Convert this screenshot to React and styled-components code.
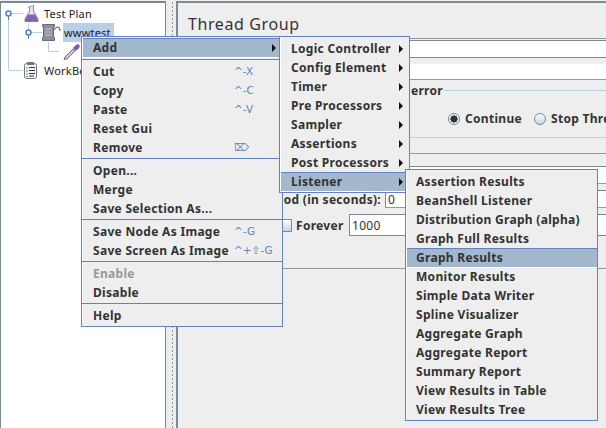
import React from "react";
import styled, { createGlobalStyle } from "styled-components";

const Global = createGlobalStyle`
  html, body {
    margin: 0;
    padding: 0;
    background: #eeeeee;
  }
  body {
    font-family: "Noto Sans", "DejaVu Sans", sans-serif;
    color: #333333;
  }
`;

const Frame = styled.div`
  position: relative;
  width: 606px;
  height: 428px;
  overflow: hidden;
  display: flex;
  background: #eeeeee;
  padding-top: 1px;
  box-sizing: border-box;
`;

/* left tree */
const TreePane = styled.div`
  width: 165px;
  flex: none;
  box-sizing: border-box;
  background: #fff;
  border-top: 2px solid #7a8a99;
  border-left: 1px solid #7a8a99;
  padding-top: 1px;
  font-size: 11px;
  letter-spacing: 0.2px;
`;

const Divider = styled.div`
  width: 11px;
  flex: none;
  box-sizing: border-box;
  border-left: 1px solid #7a8a99;
  margin-left: 0;
  background-image: radial-gradient(circle, #8a99a8 0.7px, transparent 0.8px);
  background-size: 3px 4px;
  background-position: 5px 0;
  background-repeat: repeat-y;
`;

const TreeRow = styled.div`
  display: flex;
  align-items: center;
  height: 19px;
  color: #222;
`;

const TreeLabel = styled.span`
  margin-left: ${(p) => p.$gap}px;
  padding: 0 3px 0 1px;
  height: 19px;
  line-height: 19px;
  background: ${(p) => (p.$selected ? "#b8cfe5" : "transparent")};
  white-space: nowrap;
`;

/* right panel */
const Panel = styled.div`
  flex: 1;
  min-width: 0;
  box-sizing: border-box;
  border-top: 2px solid #7a8a99;
  border-left: 2px solid #7a8a99;
  display: flex;
  flex-direction: column;
  font-size: 12px;
  font-weight: 700;
  letter-spacing: 0.3px;
`;

const Title = styled.div`
  height: 36px;
  line-height: 43px;
  flex: none;
  box-sizing: border-box;
  padding-left: 10px;
  font-size: 16px;
  font-weight: 400;
  letter-spacing: 0.6px;
  color: #333;
  border-bottom: 1px solid #999;
`;

const Rule = styled.div`
  flex: none;
  height: 1px;
  margin-top: ${(p) => p.$gap}px;
  background: ${(p) => p.$color};
`;

const TextField = styled.div`
  flex: none;
  box-sizing: border-box;
  height: ${(p) => p.$height}px;
  margin-top: ${(p) => p.$gap}px;
  margin-left: 110px;
  background: #fff;
  border-top: 1px solid ${(p) => p.$top || "#7a8a99"};
  border-bottom: 1px solid ${(p) => p.$bottom || "#7a8a99"};
`;

const Legend = styled.div`
  flex: none;
  height: 18px;
  margin-top: 1px;
  display: flex;
  align-items: center;
  white-space: nowrap;
`;

const LegendText = styled.div`
  width: 265px;
  flex: none;
  display: flex;
  justify-content: flex-end;
`;

const LegendLine = styled.div`
  flex: 1;
  height: 1px;
  margin-left: 1px;
  background: #b8cfe5;
`;

const RadioRow = styled.div`
  flex: none;
  height: 19px;
  margin-top: 10px;
  padding-left: 270px;
  display: flex;
  align-items: center;
  white-space: nowrap;
`;

const Radio = styled.span`
  width: 12px;
  height: 12px;
  flex: none;
  box-sizing: border-box;
  border-radius: 50%;
  border: 1px solid #7a8a99;
  background: ${(p) =>
    p.$checked
      ? "radial-gradient(circle, #333 3.4px, #eef2f7 3.8px)"
      : "linear-gradient(#fff, #c4d4e4)"};
  margin-right: 5px;
`;

const RadioLabel = styled.span`
  width: 69px;
  flex: none;
`;

const FormRow = styled.div`
  flex: none;
  height: ${(p) => p.$height}px;
  margin-top: ${(p) => p.$gap}px;
  display: flex;
  align-items: center;
  white-space: nowrap;
`;

const FormLabel = styled.div`
  width: ${(p) => p.$width}px;
  flex: none;
  display: flex;
  justify-content: flex-end;
  font-size: 12px;
`;

const Input = styled.div`
  flex: 1;
  align-self: stretch;
  box-sizing: border-box;
  margin-left: ${(p) => p.$gap}px;
  padding-left: 2px;
  background: #fff;
  border-top: 1px solid #7a8a99;
  border-left: 1px solid #7a8a99;
  border-bottom: 1px solid ${(p) => p.$bottom};
  font-weight: 400;
  font-size: 12px;
  display: flex;
  align-items: center;
`;

const Check = styled.span`
  width: 10px;
  height: 13px;
  flex: none;
  box-sizing: border-box;
  margin-left: 104px;
  border: 1px solid #7a8a99;
  border-left: none;
  background: linear-gradient(#fff, #c4d4e4);
`;

const CheckLabel = styled.span`
  width: 53px;
  flex: none;
  margin-left: 4px;
`;

/* popup menus, they lie over the rest */
const Menu = styled.div`
  position: absolute;
  left: ${(p) => p.$left}px;
  top: ${(p) => p.$top}px;
  width: ${(p) => p.$width}px;
  box-sizing: border-box;
  background: #eeeeee;
  border: 1px solid #6382bf;
  box-shadow: inset 1px 0 0 #fff;
  padding: ${(p) => p.$padTop}px 0 1px 1px;
  font-size: 12px;
  font-weight: 700;
  letter-spacing: 0.3px;
  color: #333;
  z-index: ${(p) => p.$layer};
`;

const Item = styled.div`
  position: relative;
  height: 19px;
  line-height: 19px;
  padding-left: ${(p) => p.$indent || 10}px;
  white-space: nowrap;
  display: flex;
  justify-content: space-between;
  color: ${(p) => (p.$disabled ? "#999999" : "#333333")};
  background: ${(p) => (p.$active ? "#a3b8cc" : "transparent")};
  box-shadow: ${(p) =>
    p.$active ? "inset 0 1px 0 #6382bf, 0 1px 0 #fff" : "none"};
`;

const Arrow = styled.span`
  align-self: center;
  width: 0;
  height: 0;
  margin-right: 6px;
  border-top: 4px solid transparent;
  border-bottom: 4px solid transparent;
  border-left: 4px solid #111;
`;

const Shortcut = styled.span`
  width: 48px;
  flex: none;
  font-family: "DejaVu Sans", sans-serif;
  font-size: 10.5px;
  font-weight: 400;
  letter-spacing: 0;
  color: #6382bf;
`;

const Separator = styled.div`
  height: ${(p) => (p.$first ? 5 : 4)}px;
  box-sizing: border-box;
  margin-left: -1px;
  padding-top: ${(p) => (p.$first ? 2 : 1)}px;

  &::before {
    content: "";
    display: block;
    height: 1px;
    background: #6382bf;
  }
`;

const FlaskIcon = () => (
  <svg width="17" height="19" viewBox="0 0 17 19">
    <path d="M5.5 2v5l-4.5 8v2.5h13V15L9.5 7V2" fill="#e4e2ee" stroke="#8a8a9a" />
    <path d="M4 10.5h7l3 5v2H1v-2z" fill="#8263b8" />
    <path d="M4 3.5l6-2.5" stroke="#a9a9b5" />
  </svg>
);

const SpoolIcon = () => (
  <svg width="20" height="19" viewBox="0 0 20 19">
    <path d="M.5 1.500h12v2h-1v11h1v3H.5v-3h1v-11h-1z" fill="#8c8c9c" stroke="#6a6a78" />
    <path d="M3 6h7M3 9h7M3 12h7" stroke="#c8c8d4" />
    <path d="M12 7c2-4 6-4 6 1" fill="none" stroke="#7a7a88" strokeWidth="1.3" />
  </svg>
);

const PipetteIcon = () => (
  <svg width="20" height="19" viewBox="0 0 20 19">
    <path d="M3 17l-1 1 1-3 8-8 2 2-8 8z" fill="#c9c2dd" stroke="#7a66a8" />
    <path d="M11 6l3-3 2-1 2 2-1 2-3 3z" fill="#7a55b5" />
  </svg>
);

const ClipboardIcon = () => (
  <svg width="16" height="19" viewBox="0 0 16 19">
    <rect x="1.5" y="2.5" width="12" height="15" rx="2" fill="#f4f4f4" stroke="#77708a" />
    <rect x="4" y="1" width="7" height="3" fill="#77708a" />
    <path d="M6 6.5h6M6 9.5h6M6 12.5h6M6 15h5" stroke="#333" />
    <path d="M3 7h2M3 10h2M3 13h2M3 15.5h2" stroke="#5aa05a" />
  </svg>
);

const Handle = ({ x, y }) => (
  <circle cx={x} cy={y} r="2.5" fill="#fff" stroke="#4d7fc4" strokeWidth="1.5" />
);

const line = "#b8cfe5";

// gutters draw in window x, hence the viewBox starting at 1 (pane border)
const RootGutter = () => (
  <svg width="23" height="19" viewBox="1 0 23 19">
    <path d="M8.500 9v10M12 9.500h11" stroke={line} fill="none" />
    <path d="M8.500 12v4" stroke="#4d7fc4" />
    <Handle x={8.5} y={9.5} />
  </svg>
);

const PlanGutter = () => (
  <svg width="41" height="19" viewBox="1 0 41 19">
    <path d="M8.500 0v19M28.500 0v6M31 9.500h11" stroke={line} fill="none" />
    <path d="M28.500 12v4" stroke="#4d7fc4" />
    <Handle x={28.5} y={9.5} />
  </svg>
);

const LeafGutter = () => (
  <svg width="61" height="19" viewBox="1 0 61 19">
    <path d="M8.500 0v19M48.500 0v9.500H59" stroke={line} fill="none" />
  </svg>
);

const BenchGutter = () => (
  <svg width="22" height="19" viewBox="1 0 22 19">
    <path d="M8.500 0v9.500H23" stroke={line} fill="none" />
  </svg>
);

const mainMenu = [
  [{ label: "Add", active: true, arrow: true }],
  [
    { label: "Cut", keys: "^-X" },
    { label: "Copy", keys: "^-C" },
    { label: "Paste", keys: "^-V" },
    { label: "Reset Gui" },
    { label: "Remove", keys: "⌦" },
  ],
  [{ label: "Open..." }, { label: "Merge" }, { label: "Save Selection As..." }],
  [
    { label: "Save Node As Image", keys: "^-G" },
    { label: "Save Screen As Image", keys: "^+⇧-G" },
  ],
  [{ label: "Enable", disabled: true }, { label: "Disable" }],
  [{ label: "Help" }],
];

const addMenu = [
  "Logic Controller",
  "Config Element",
  "Timer",
  "Pre Processors",
  "Sampler",
  "Assertions",
  "Post Processors",
  "Listener",
];

const listenerMenu = [
  "Assertion Results",
  "BeanShell Listener",
  "Distribution Graph (alpha)",
  "Graph Full Results",
  "Graph Results",
  "Monitor Results",
  "Simple Data Writer",
  "Spline Visualizer",
  "Aggregate Graph",
  "Aggregate Report",
  "Summary Report",
  "View Results in Table",
  "View Results Tree",
];

export default function App() {
  return (
    <>
      <Global />
      <Frame>
        <TreePane>
          <TreeRow>
            <RootGutter />
            <FlaskIcon />
            <TreeLabel $gap={2}>Test Plan</TreeLabel>
          </TreeRow>
          <TreeRow>
            <PlanGutter />
            <SpoolIcon />
            <TreeLabel $gap={1} $selected>wwwtest</TreeLabel>
          </TreeRow>
          <TreeRow>
            <LeafGutter />
            <PipetteIcon />
          </TreeRow>
          <TreeRow>
            <BenchGutter />
            <ClipboardIcon />
            <TreeLabel $gap={4}>WorkBench</TreeLabel>
          </TreeRow>
        </TreePane>
        <Divider />
        <Panel>
          <Title>Thread Group</Title>
          <TextField $gap={1} $height={18} />
          <TextField $gap={6} $height={16} $top="#fff" $bottom="#999" />
          <Legend>
            <LegendText>Action to be taken after a Sampler error</LegendText>
            <LegendLine />
          </Legend>
          <RadioRow>
            <Radio $checked />
            <RadioLabel>Continue</RadioLabel>
            <Radio />
            <span>Stop Thread</span>
          </RadioRow>
          <Rule $gap={9} $color="#b8cfe5" />
          <Rule $gap={15} $color="#999" />
          <TextField $gap={12} $height={18} $bottom="#999" />
          <FormRow $gap={6} $height={18}>
            <FormLabel $width={203}>Ramp-Up Period (in seconds):</FormLabel>
            <Input $gap={4} $bottom="#999">0</Input>
          </FormRow>
          <FormRow $gap={6} $height={22}>
            <Check />
            <CheckLabel>Forever</CheckLabel>
            <Input $gap={0} $bottom="#7a8a99">1000</Input>
          </FormRow>
          <Rule $gap={32} $color="#999" />
        </Panel>

        <Menu $left={81} $top={36} $width={202} $padTop={1} $layer={1}>
          {mainMenu.map((group, i) => (
            <React.Fragment key={i}>
              {i > 0 && <Separator $first={i === 1} />}
              {group.map((entry) => (
                <Item key={entry.label} $active={entry.active} $disabled={entry.disabled}>
                  {entry.label}
                  {entry.arrow && <Arrow />}
                  {entry.keys && <Shortcut>{entry.keys}</Shortcut>}
                </Item>
              ))}
            </React.Fragment>
          ))}
        </Menu>

        <Menu $left={279} $top={36} $width={131} $padTop={2} $layer={2}>
          {addMenu.map((label) => (
            <Item key={label} $active={label === "Listener"}>
              {label}
              <Arrow />
            </Item>
          ))}
        </Menu>

        <Menu $left={405} $top={169} $width={193} $padTop={2} $layer={3}>
          {listenerMenu.map((label) => (
            <Item key={label} $indent={9} $active={label === "Graph Results"}>
              {label}
            </Item>
          ))}
        </Menu>
      </Frame>
    </>
  );
}
